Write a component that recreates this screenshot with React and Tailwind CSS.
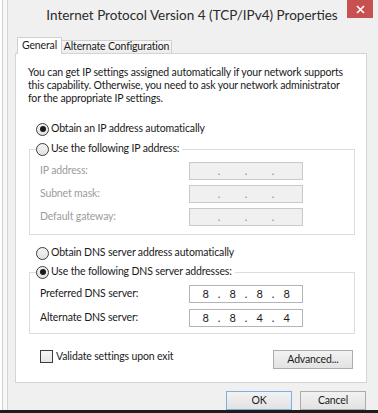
import React from 'react'

const FONT = "font-['Lato',sans-serif]"

function Radio({ checked }) {
  return (
    <span className="flex h-[13px] w-[13px] shrink-0 items-center justify-center rounded-full border border-[#3c3c3c] bg-gradient-to-b from-[#f4f4f4] to-[#e2e2e2]">
      {checked && <span className="h-[6px] w-[6px] rounded-full bg-[#1a1a1a]" />}
    </span>
  )
}

function IpBox({ values, disabled }) {
  const parts = values || ['', '', '', '']
  return (
    <div
      className={
        'flex h-[18px] w-[114px] items-center px-[2px] text-[11px] border ' +
        (disabled ? 'border-[#c9c9c9] bg-[#f0f0f0] text-[#8a8a8a]' : 'border-[#b4b4b4] bg-white text-[#1a1a1a]')
      }
    >
      {parts.map((p, i) => (
        <React.Fragment key={i}>
          {i > 0 && <span className="flex w-0 justify-center">.</span>}
          <span className="flex-1 text-center">{p}</span>
        </React.Fragment>
      ))}
    </div>
  )
}

function Button({ children, primary, className = '' }) {
  return (
    <div
      className={
        'flex h-[19px] items-center justify-center bg-gradient-to-b from-[#f2f2f2] to-[#e3e3e3] text-[#1a1a1a] border ' +
        (primary ? 'border-[#7fb0dd]' : 'border-[#acacac]') +
        ' ' + className
      }
    >
      {children}
    </div>
  )
}

function Row({ label, disabled, values }) {
  return (
    <div className="flex items-center">
      <span className={'w-[159px] pl-[10px] ' + (disabled ? 'text-[#9c9c9c]' : 'text-[#1a1a1a]')}>{label}</span>
      <IpBox values={values} disabled={disabled} />
    </div>
  )
}

export default function App() {
  return (
    <div className={`flex h-[413px] w-[378px] flex-col overflow-hidden bg-[#f0f0f0] text-[10.5px] tracking-[-0.15px] text-[#1a1a1a] ${FONT}`}>
      <div className="flex h-[410px]">
        {/* window behind */}
        <div className="flex w-[8px] shrink-0">
          <div className="w-[3px] border-r border-[#cfcfcf] bg-white" />
          <div className="flex-1 border-r border-[#d4d4d4] bg-[#f7f7f7]" />
        </div>

        <div className="relative flex flex-1 flex-col">
          <div className="flex h-[31px] items-center justify-center pr-[2px] text-[13.5px] tracking-normal text-[#2b2b2b]">
            Internet Protocol Version 4 (TCP/IPv4) Properties
          </div>
          <div className="absolute right-[5px] top-0 flex h-[18px] w-[26px] items-center justify-center bg-[#c75050]">
            <svg width="9" height="9" viewBox="0 0 9 9">
              <path d="M1 1 L8 8 M8 1 L1 8" stroke="white" strokeWidth="1.6" />
            </svg>
          </div>

          <div className="mt-[6px] flex flex-col pl-[7px]">
            <div className="flex h-[16px] items-end pl-[2px]">
              <div className="relative z-10 -mb-[1px] flex h-[17px] w-[45px] items-center justify-center whitespace-nowrap border border-b-0 border-[#d0d0d0] bg-white">
                General
              </div>
              <div className="flex h-[13px] w-[110px] items-center justify-center whitespace-nowrap border border-b-0 border-l-0 border-[#d0d0d0] bg-gradient-to-b from-[#f8f8f8] to-[#ececec]">
                Alternate Configuration
              </div>
            </div>

            <div className="flex h-[330px] w-[352px] flex-col border border-[#d4d4d4] bg-white">
              <p className="pl-[12px] pt-[12px] leading-[13px] whitespace-nowrap">
                You can get IP settings assigned automatically if your network supports
                <br />
                this capability. Otherwise, you need to ask your network administrator
                <br />
                for the appropriate IP settings.
              </p>

              <div className="mt-[16px] flex h-[16px] items-center gap-[2px] pl-[20px]">
                <Radio checked />
                <span>Obtain an IP address automatically</span>
              </div>

              <fieldset className="ml-[13px] mt-[4px] w-[326px] border border-[#dcdcdc] pb-[8px]">
                <legend className="ml-[6px] flex h-[16px] items-center gap-[2px] pr-[3px]">
                  <Radio />
                  <span>Use the following IP address:</span>
                </legend>
                <div className="mt-[5px] flex flex-col gap-[5px]">
                  <Row label="IP address:" disabled />
                  <Row label="Subnet mask:" disabled />
                  <Row label="Default gateway:" disabled />
                </div>
              </fieldset>

              <div className="mt-[10px] flex h-[16px] items-center gap-[2px] pl-[20px]">
                <Radio />
                <span>Obtain DNS server address automatically</span>
              </div>

              <fieldset className="ml-[13px] mt-[3px] w-[326px] border border-[#dcdcdc] pb-[6px]">
                <legend className="ml-[6px] flex h-[16px] items-center gap-[2px] pr-[3px]">
                  <Radio checked />
                  <span>Use the following DNS server addresses:</span>
                </legend>
                <div className="mt-[5px] flex flex-col gap-[6px]">
                  <Row label="Preferred DNS server:" values={['8', '8', '8', '8']} />
                  <Row label="Alternate DNS server:" values={['8', '8', '4', '4']} />
                </div>
              </fieldset>

              <div className="mt-[16px] flex items-start justify-between pl-[24px] pr-[13px]">
                <div className="-mt-[1px] flex items-center gap-[3px]">
                  <span className="h-[13px] w-[13px] border border-[#3c3c3c] bg-gradient-to-b from-[#f6f6f6] to-[#e6e6e6]" />
                  <span>Validate settings upon exit</span>
                </div>
                <Button className="w-[80px]">Advanced...</Button>
              </div>
            </div>

            <div className="mt-[8px] flex w-[352px] justify-end gap-[8px] pr-[1px]">
              <Button primary className="w-[66px]">OK</Button>
              <Button className="w-[66px]">Cancel</Button>
            </div>
          </div>
        </div>
      </div>
      <div className="h-[3px] bg-[#1c1c1c]" />
    </div>
  )
}
